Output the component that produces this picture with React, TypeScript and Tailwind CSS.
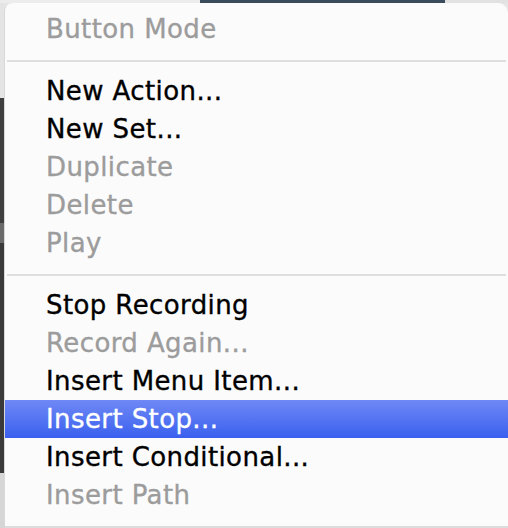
import React from "react";

type Item = { label: string; disabled?: boolean; active?: boolean };

const groups: Item[][] = [
  [{ label: "Button Mode", disabled: true }],
  [
    { label: "New Action..." },
    { label: "New Set..." },
    { label: "Duplicate", disabled: true },
    { label: "Delete", disabled: true },
    { label: "Play", disabled: true },
  ],
  [
    { label: "Stop Recording" },
    { label: "Record Again...", disabled: true },
    { label: "Insert Menu Item..." },
    { label: "Insert Stop...", active: true },
    { label: "Insert Conditional..." },
    { label: "Insert Path", disabled: true },
  ],
];

function Row({ item }: { item: Item }) {
  const cls = item.active
    ? "bg-gradient-to-b from-[#6f88f5] to-[#3a5fee] text-white"
    : item.disabled
    ? "text-[#9c9c9c]"
    : "text-black";
  return (
    <div className={`h-[38px] flex items-center pl-[41px] text-[26px] leading-none tracking-[0.4px] [-webkit-text-stroke:0.35px] ${cls}`}>
      <span className="pb-[1px]">{item.label}</span>
    </div>
  );
}

export default function App() {
  return (
    <div
      className="w-[508px] h-[528px] flex flex-col bg-[#e6e6e6] overflow-hidden"
      style={{ fontFamily: '"DejaVu Sans", "Liberation Sans", sans-serif' }}
    >
      <div className="h-[3px] flex shrink-0">
        <div className="w-[200px] bg-[#ececec]" />
        <div className="w-[245px] bg-[#3a4b5c]" />
        <div className="flex-1 bg-[#e2e2e2]" />
      </div>
      <div className="flex flex-1 min-h-0">
        <div className="w-[4px] flex flex-col shrink-0">
          <div className="h-[95px] bg-[#e4e4e4]" />
          <div className="h-[125px] bg-[#3e3e3e]" />
          <div className="h-[20px] bg-[#6a6a6a]" />
          <div className="h-[230px] bg-[#3a3a3a]" />
          <div className="flex-1 bg-[#d6d6d6]" />
        </div>
        <div className="flex-1 flex flex-col bg-[#fbfbfb] rounded-tl-[8px] rounded-tr-[10px] border-l border-[#d8d8d8] pt-[7px]">
          {groups.map((g, gi) => (
            <div key={gi} className="flex flex-col">
              {gi > 0 && (
                <div className="pt-[12px] pb-[10px] px-[2px]">
                  <div className="h-[2px] bg-[#dedede]" />
                </div>
              )}
              {g.map((it) => (
                <Row key={it.label} item={it} />
              ))}
            </div>
          ))}
          <div className="flex-1" />
          <div className="h-[2px] bg-[#dcdcdc]" />
        </div>
      </div>
    </div>
  );
}
